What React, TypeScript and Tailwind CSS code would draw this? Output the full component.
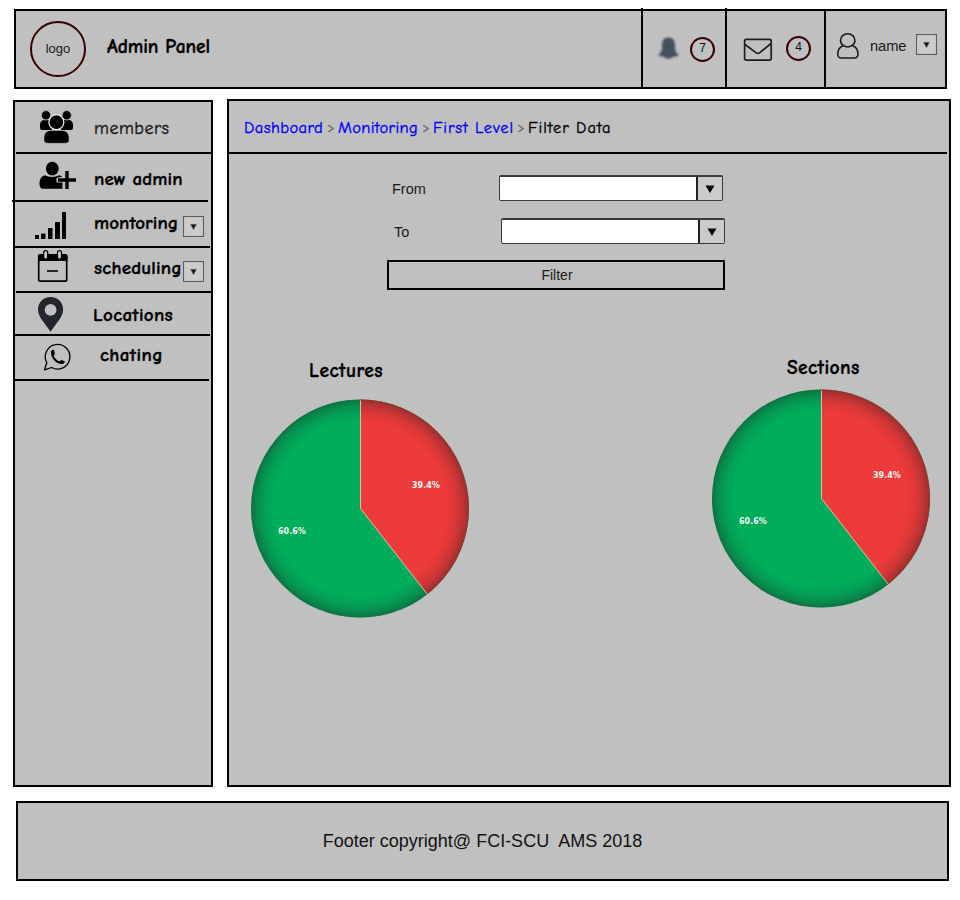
import React from "react";

const HAND =
  "font-['Comic_Sans_MS','Comic_Neue',Inter,sans-serif] [font-feature-settings:'cv11'] whitespace-pre";
const BOLD = "font-bold [-webkit-text-stroke:0.35px_#000]";
const SANS = "font-['Liberation_Sans',Arial,sans-serif] whitespace-pre";

function DropBox({ className = "" }: { className?: string }) {
  return (
    <div className={`flex h-[21px] w-[21px] shrink-0 items-center justify-center border border-[#5c5c5c] bg-[#cbcbcb] shadow-[inset_0_0_1px_#777] ${className}`}>
      <svg width="9" height="9" viewBox="0 0 9 9">
        <path d="M1.5 2.300h6L4.500 7.800z" fill="#161616" stroke="#777" strokeWidth=".5" />
      </svg>
    </div>
  );
}

function Badge({ value, className }: { value: string; className: string }) {
  return (
    <div className={`flex h-[25px] w-[25px] shrink-0 justify-center rounded-full border-2 border-[#380000] text-[12px] leading-[19px] text-[#111] ${SANS} ${className}`}>
      {value}
    </div>
  );
}

function Header() {
  return (
    <header className="ml-[14px] flex h-[80px] w-[933px] border-2 border-black bg-[#c0c0c0]">
      <div className="flex w-[625px]">
        <div className={`mt-[10px] ml-[14px] flex h-[56px] w-[56px] items-center justify-center rounded-full border-2 border-[#380000] text-[13px] text-[#1a1a1a] ${SANS}`}>
          logo
        </div>
        <h1 className={`mt-[24px] ml-[21px] text-[19.500px] leading-[24px] tracking-[-0.100px] ${BOLD} ${HAND}`}>Admin Panel</h1>
      </div>
      <div className="-mt-[3px] flex h-[79px] w-[84px] border-l-2 border-black">
        <svg className="mt-[28px] ml-[14px] blur-[0.8px]" width="22" height="24" viewBox="657 36 22 24">
          <path
            d="M668.5 37.500c4.500 0 6.500 3 6.500 7.500 0 2-.2 4 .6 6.200.6 1.600 2.800 2.800 2.800 4-.4 1.200-3.200 1.300-5.400 1.500-1.500 2.600-7.500 2.600-9 0-2.200-.2-5-.3-5.400-1.500 0-1.200 2.200-2.400 2.800-4 .8-2.200.6-4.200.6-6.200 0-4.500 2-7.500 6.500-7.500z"
            fill="#444f5d"
          />
        </svg>
        <Badge value="7" className="mt-[29px] ml-[11px]" />
      </div>
      <div className="-mt-[3px] flex h-[79px] w-[99px] border-l-2 border-black">
        <svg className="mt-[29px] ml-[16px]" width="30" height="26" viewBox="743 37 30 26" fill="none" stroke="#1c1c1c" strokeWidth="1.700">
          <rect x="744.600" y="39.300" width="26.600" height="20.800" rx="1.800" />
          <path d="M745 44.500l11.300 8.400q1.600 1.100 3.200 0L771 43.500" />
        </svg>
        <Badge value="4" className="mt-[28px] ml-[13px]" />
      </div>
      <div className="flex border-l-2 border-black">
        <svg className="mt-[21px] ml-[10px] shrink-0" width="24" height="28" viewBox="836 32 24 28" fill="none" stroke="#181818" strokeWidth="1.500">
          <path d="M843.600 45.700c-2-1.200-3.100-3-3.100-5.300a7.200 6.700 0 0 1 14.400 0c0 2.300-1.100 4.100-3.100 5.300-2.500 1.500-5.700 1.500-8.200 0z" />
          <path d="M843.300 45.800c-3.500 1.200-5.500 4.200-5.500 8.200 0 2.800 1.100 4 3.700 4h12.800c2.600 0 3.700-1.200 3.700-4 0-4-2-7-5.500-8.200" />
        </svg>
        <span className={`mt-[25px] ml-[10px] w-[36px] text-[14.700px] leading-[20px] tracking-[-0.1px] text-[#1a1a1a] ${SANS}`}>name</span>
        <DropBox className="mt-[23px] ml-[10px]" />
      </div>
    </header>
  );
}

const MembersIcon = (
  <svg className="mt-[8px] ml-[24px]" width="35" height="34" viewBox="39 110 35 34">
    <path d="M40 128v-3c0-3 1.500-4.500 4-5h8v10H42q-2 0-2-2zM73 128v-3c0-3-1.500-4.500-4-5h-8v10h10q2 0 2-2z" />
    <circle cx="46" cy="115.300" r="4.700" stroke="#c0c0c0" strokeWidth=".8" />
    <circle cx="66.700" cy="115.300" r="4.700" stroke="#c0c0c0" strokeWidth=".8" />
    <path d="M44 140.500V138c0-4.500 2.500-7.200 6.500-7.500h12c4 .3 6.500 3 6.500 7.500v2.500q0 2.800-4 2.800H48q-4 0-4-2.800z" stroke="#c0c0c0" strokeWidth=".5" />
    <circle cx="56.400" cy="122.200" r="7.500" stroke="#eee" strokeWidth="1.200" />
  </svg>
);
const NewAdminIcon = (
  <svg className="mt-[7px] ml-[24px]" width="38" height="30" viewBox="39 161 38 30">
    <ellipse cx="52.300" cy="168.600" rx="6.400" ry="6.800" />
    <path d="M39.500 184c0-5 2-8 5.500-8.800 4 2.300 10 2.300 14 0 1.500.3 2.500.8 3.300 1.600L56.500 178v4.500h6v6.300H43q-3.500 0-3.500-4.800z" />
    <path d="M67 171v18M58 180h18" stroke="#000" strokeWidth="3.400" />
  </svg>
);
const BarsIcon = (
  <svg className="mt-[9px] ml-[19px]" width="33" height="29" viewBox="34 211 33 29">
    <path d="M35 235h4v4h-4zM41 233.500h4.500v5.500H41zM48 228h4.500v11H48zM55 222h5v17h-5zM62 212h4v27h-4z" />
  </svg>
);
const CalendarIcon = (
  <svg className="mt-[2px] ml-[22px]" width="31" height="33" viewBox="37 250 31 33">
    <rect x="38.700" y="255" width="28" height="26.200" rx="1.800" fill="none" stroke="#000" strokeWidth="1.700" />
    <path d="M38 261v-5q0-2 2-2h25.500q2 0 2 2v5z" />
    <rect x="43.700" y="250.700" width="4" height="8.500" rx="2" fill="#ccc" stroke="#000" strokeWidth="1.300" />
    <rect x="57.500" y="250.700" width="4" height="8.500" rx="2" fill="#ccc" stroke="#000" strokeWidth="1.300" />
    <path d="M47 271h11" stroke="#000" strokeWidth="1.600" />
  </svg>
);
const PinIcon = (
  <svg className="mt-[3px] ml-[22px]" width="27" height="36" viewBox="37 296 27 36">
    <path fillRule="evenodd" d="M50.600 297c7.200 0 12.500 5.400 12.500 12.500 0 7.500-6.500 13-12.500 22.200C44.500 322.500 38 317 38 309.500 38 302.400 43.400 297 50.600 297zm0 7a5.900 5.900 0 1 0 0 11.800 5.900 5.900 0 0 0 0-11.800z" fill="#23272d" />
  </svg>
);
const ChatIcon = (
  <svg className="mt-[6px] ml-[28px]" width="29" height="30" viewBox="43 342 29 30">
    <path d="M44.500 369.800l2.300-7.100a12.300 12.300 0 1 1 4.800 4.800z" fill="none" stroke="#000" strokeWidth="1.300" strokeLinejoin="round" />
    <path d="M51 351.500c.5-1.500 1.700-2.200 3-1.500l.8 3.500c.2.900-.9 1.600-1 2.300 1 2.600 3.200 4.600 5.500 5.500.8 0 1.500-1.300 2.300-1.300l3 1.300c.5 1.300-.8 2.600-2.600 2.800-6 .2-11.600-6.400-11-12.600z" />
  </svg>
);

type Item = { icon: React.ReactNode; label: string; row: string; text: string; line: string; drop?: string };
const items: Item[] = [
  { icon: MembersIcon, label: "members", row: "h-[52px]", text: "mt-[15px] font-normal text-[18px] tracking-[0.500px] text-[#111] [-webkit-text-stroke:0.3px_#111]", line: "ml-[1px] w-[195px]" },
  { icon: NewAdminIcon, label: "new admin", row: "h-[48px]", text: `mt-[13px] text-[19px] tracking-[0.100px] ${BOLD}`, line: "-ml-[3px] w-[196px]" },
  { icon: BarsIcon, label: "montoring", row: "h-[46px]", text: `mt-[9px] text-[19px] tracking-[0.050px] ${BOLD}`, line: "w-[195px]", drop: "mt-[14px]" },
  { icon: CalendarIcon, label: "scheduling", row: "h-[45px]", text: `mt-[8px] text-[19px] tracking-[0.200px] ${BOLD}`, line: "ml-[1px] w-[195px]", drop: "mt-[13px]" },
  { icon: PinIcon, label: "Locations", row: "h-[43px]", text: `mt-[10px] -ml-[1px] text-[19px] tracking-[0.300px] ${BOLD}`, line: "w-[195px]" },
  { icon: ChatIcon, label: "chating", row: "h-[45px]", text: `mt-[7px] ml-[6px] text-[19px] tracking-[0.400px] ${BOLD}`, line: "w-[194px]" },
];

function Sidebar() {
  return (
    <nav className="mt-[1px] h-[687px] w-[200px] shrink-0 border-2 border-black bg-[#c0c0c0]">
      {items.map((it) => (
        <div key={it.label} className={`flex flex-col ${it.row}`}>
          <div className="flex min-h-0 flex-1">
            <div className="w-[79px] shrink-0">{it.icon}</div>
            <div className="w-[89px] shrink-0">
              <div className={`leading-[24px] ${HAND} ${it.text}`}>{it.label}</div>
            </div>
            {it.drop && <DropBox className={it.drop} />}
          </div>
          <div className={`h-[2px] shrink-0 bg-black ${it.line}`} />
        </div>
      ))}
    </nav>
  );
}

function Select() {
  return (
    <div className="flex h-[26px] w-[224px] rounded-[2px] border-[1.500px] border-t-2 border-[#3a3a3a] bg-white">
      <div className="flex-1" />
      <div className="flex w-[26px] items-center justify-center border-l-2 border-[#222] bg-[#cbcbcb]">
        <svg width="10" height="10" viewBox="0 0 10 10">
          <path d="M.5 1.500h9L5 9z" />
        </svg>
      </div>
    </div>
  );
}

function Pie({ id }: { id: string }) {
  return (
    <svg className="block" width="220" height="220" viewBox="-110 -110.500 220 220">
      <defs>
        <radialGradient id={id} gradientUnits="userSpaceOnUse" cx="0" cy="0" r="109">
          <stop offset=".8" stopColor="#202020" stopOpacity="0" />
          <stop offset=".88" stopColor="#202020" stopOpacity=".09" />
          <stop offset=".95" stopColor="#202020" stopOpacity=".24" />
          <stop offset="1" stopColor="#202020" stopOpacity=".42" />
        </radialGradient>
      </defs>
      <circle r="109" fill="#00ad5b" />
      <path d="M0 0V-109A109 109 0 0 1 67.300 85.700Z" fill="#ed3a3a" />
      <circle r="109" fill={`url(#${id})`} />
      <path d="M.5 -108V0L67.300 85.700" fill="none" stroke="#d6c3a4" strokeWidth="1" />
      <g className="font-['DejaVu_Sans',sans-serif] text-[8px] font-bold" fill="#f4f4f4">
        <text x="52" y="-20.500">39.4%</text>
        <text x="-82" y="25.500">60.6%</text>
      </g>
    </svg>
  );
}

function Main() {
  const link = "text-[#0000f5] [-webkit-text-stroke:0.35px_#0000f5]";
  const sep = "text-[#666] [-webkit-text-stroke:0.35px_#666]";
  return (
    <main className="ml-[14px] h-[688px] w-[724px] shrink-0 border-2 border-black bg-[#c0c0c0]">
      <div className={`flex h-[51px] pt-[15px] pl-[15px] text-[16.500px] leading-[24px] ${HAND}`}>
        <a className={`w-[83px] tracking-[0.400px] ${link}`}>Dashboard</a>
        <span className={`w-[11px] text-[14px] ${sep}`}>&gt;</span>
        <a className={`w-[84px] tracking-[0.350px] ${link}`}>Monitoring</a>
        <span className={`w-[11px] text-[14px] ${sep}`}>&gt;</span>
        <a className={`w-[84px] tracking-[0.850px] ${link}`}>First Level</a>
        <span className={`w-[11px] text-[14px] ${sep}`}>&gt;</span>
        <span className="tracking-[0.950px] [-webkit-text-stroke:0.35px_#000]">Filter Data</span>
      </div>
      <div className="h-[2px] w-[718px] bg-black" />
      <div className={`ml-[158px] w-[340px] pt-[21px] text-[14.500px] leading-[20px] text-[#1a1a1a] ${SANS}`}>
        <div className="flex h-[43px] pl-[5px]">
          <span className="mt-[4px] w-[107px]">From</span>
          <Select />
        </div>
        <div className="flex h-[42px] pl-[7px]">
          <span className="mt-[4px] w-[107px]">To</span>
          <Select />
        </div>
        <button className="flex h-[30px] w-[338px] items-center justify-center border-2 border-black pl-[2px] text-[14px]">Filter</button>
      </div>
      <div className="flex justify-between pr-[18px] pl-[21px]">
        <section className="mt-[69px] w-[220px]">
          <h2 className={`pl-[59px] text-[19.500px] leading-[24px] tracking-[0.450px] ${BOLD} ${HAND}`}>Lectures</h2>
          <div className="mt-[15px]"><Pie id="lectures-shade" /></div>
        </section>
        <section className="mt-[66px] w-[220px]">
          <h2 className={`pl-[76px] text-[19.500px] leading-[24px] tracking-[0.400px] ${BOLD} ${HAND}`}>Sections</h2>
          <div className="mt-[8px]"><Pie id="sections-shade" /></div>
        </section>
      </div>
    </main>
  );
}

export default function App() {
  return (
    <div className="h-[900px] w-[960px] overflow-hidden bg-white pt-[9px] text-black">
      <Header />
      <div className="mt-[10px] ml-[13px] flex">
        <Sidebar />
        <Main />
      </div>
      <footer className={`mt-[14px] ml-[16px] flex h-[80px] w-[933px] items-center justify-center border-2 border-black bg-[#c0c0c0] text-[18px] text-[#111] ${SANS}`}>
        {"Footer copyright@ FCI-SCU  AMS 2018"}
      </footer>
    </div>
  );
}
